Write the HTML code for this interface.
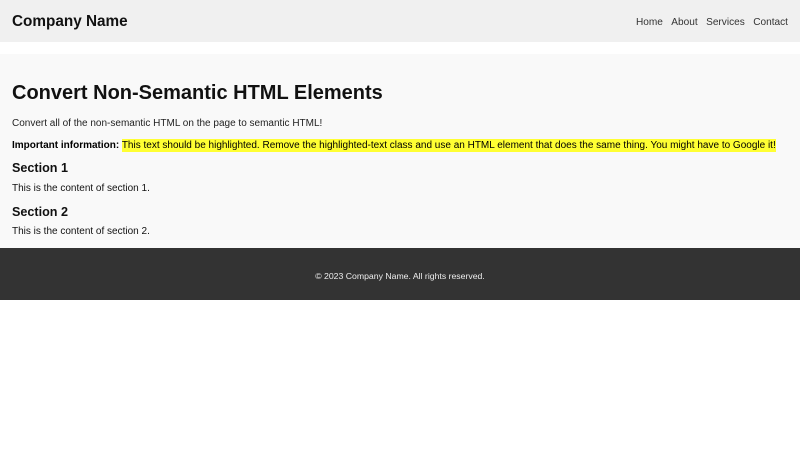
<!DOCTYPE html>
<html><head><style>
body{margin:0;font-family:"Liberation Sans",sans-serif;background:#fff;width:800px;height:450px;position:relative;color:#000}
.hd{position:absolute;top:0;left:0;width:800px;height:42px;background:#f0f0f0}
.t{position:absolute;white-space:nowrap;line-height:1}
.mn{position:absolute;top:54px;left:0;width:800px;height:194px;background:#f9f9f9}
.ft{position:absolute;top:248px;left:0;width:800px;height:52px;background:#333}
mark{background:#ffff33;color:#000;padding:1px 0}
</style></head><body>
<div class="hd"></div>
<div class="t" style="left:12px;top:14px;font-size:15.3px;font-weight:bold;color:#111">Company Name</div>
<div class="t" style="right:12px;top:18px;font-size:10.1px;color:#333">Home&nbsp;&nbsp;&nbsp;About&nbsp;&nbsp;&nbsp;Services&nbsp;&nbsp;&nbsp;Contact</div>
<div class="mn"></div>
<div class="t" style="left:12px;top:83px;font-size:20px;font-weight:bold;color:#111">Convert Non-Semantic HTML Elements</div>
<div class="t" style="left:12px;top:119px;font-size:10px;color:#222">Convert all of the non-semantic HTML on the page to semantic HTML!</div>
<div class="t" style="left:12px;top:141px;font-size:10px"><b>Important information:</b> <mark>This text should be highlighted. Remove the highlighted-text class and use an HTML element that does the same thing. You might have to Google it!</mark></div>
<div class="t" style="left:12px;top:162px;font-size:12.6px;font-weight:bold;color:#111">Section 1</div>
<div class="t" style="left:12px;top:184px;font-size:10px;color:#111">This is the content of section 1.</div>
<div class="t" style="left:12px;top:206px;font-size:12.6px;font-weight:bold;color:#111">Section 2</div>
<div class="t" style="left:12px;top:227px;font-size:10px;color:#111">This is the content of section 2.</div>
<div class="ft"></div>
<div class="t" style="left:0;width:800px;text-align:center;top:272px;font-size:8.7px;color:#eee">© 2023 Company Name. All rights reserved.</div>
</body></html>
